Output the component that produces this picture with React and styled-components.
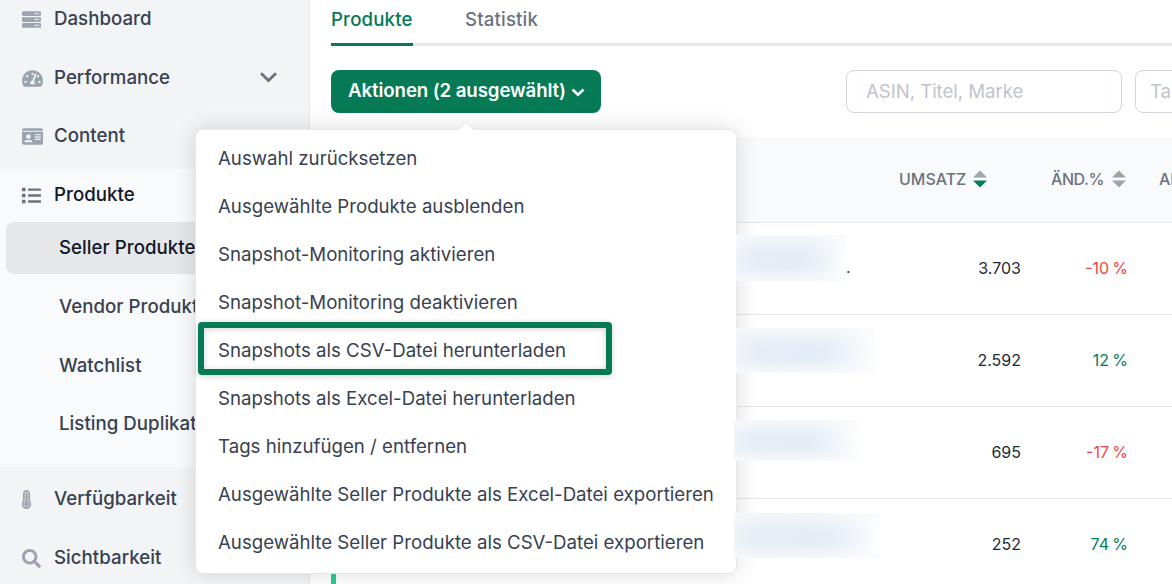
import React from 'react';
import styled, { createGlobalStyle } from 'styled-components';
import {
  FaServer,
  FaTachometerAlt,
  FaIdCard,
  FaList,
  FaThermometerFull,
  FaSearch,
} from 'react-icons/fa';

const GlobalStyle = createGlobalStyle`
  * {
    box-sizing: border-box;
  }
  body {
    margin: 0;
    overflow: hidden;
    font-family: Inter, sans-serif;
    color: #374151;
    background: #fff;
  }
`;

const Layout = styled.div`
  display: flex;
  width: 1172px;
  height: 584px;
  overflow: hidden;
`;

const Sidebar = styled.nav`
  flex: none;
  width: 310px;
  background: #f3f4f6;
  border-right: 1px solid #e5e7eb;
`;

const NavGroup = styled.div`
  display: flex;
  flex-direction: column;
  justify-content: ${props => (props.$end ? 'flex-end' : 'flex-start')};
  gap: 6px;
  height: ${props => props.$height}px;
  padding-top: ${props => props.$top || 0}px;
  padding-bottom: ${props => props.$bottom || 0}px;
  background: ${props => (props.$open ? '#f9fafb' : 'transparent')};
`;

const NavItem = styled.a`
  display: flex;
  flex: none;
  align-items: center;
  height: 52.6px;
  padding: 0 31px ${props => (props.$active ? 2 : 0)}px 22px;
  font-size: 18.67px;
  font-weight: 500;
  letter-spacing: 0.03px;
  white-space: nowrap;
  color: ${props => (props.$active ? '#111827' : '#374151')};
`;

const NavIcon = styled.span`
  display: flex;
  width: 32px;
  padding-top: 2px;
  font-size: ${props => props.$size || 19}px;
  color: ${props => (props.$active ? '#6b7280' : '#9ca3af')};

  svg {
    margin-left: ${props => (props.$narrow ? '-5px' : 0)};
  }
`;

const NavChevron = styled.svg`
  width: 19px;
  height: 12px;
  margin-left: auto;
`;

const SubNav = styled.div`
  display: flex;
  flex-direction: column;
  gap: 6px;
  margin-top: -6px;
`;

const SubItem = styled.a`
  display: flex;
  flex: none;
  align-items: center;
  height: 52.6px;
  margin: 0 6px;
  padding: 0 0 0 53px;
  border-radius: 8px;
  font-size: 18.67px;
  font-weight: 500;
  letter-spacing: 0.03px;
  white-space: nowrap;
  color: ${props => (props.$active ? '#111827' : '#374151')};
  background: ${props => (props.$active ? '#e5e7eb' : 'transparent')};
`;

const Main = styled.main`
  flex: 1;
  min-width: 0;
  padding-left: 21px;
`;

const Tabs = styled.div`
  display: flex;
  height: 46px;
`;

const Tab = styled.a`
  flex: none;
  height: 46px;
  padding-top: 8px;
  padding-left: ${props => (props.$active ? 0 : 52)}px;
  width: ${props => (props.$active ? '82px' : 'auto')};
  flex-grow: ${props => (props.$active ? 0 : 1)};
  font-size: 18.67px;
  line-height: 24px;
  font-weight: 500;
  letter-spacing: 0.15px;
  color: ${props => (props.$active ? '#057a55' : '#6b7280')};
  border-bottom: 3px solid ${props => (props.$active ? '#057a55' : '#e5e7eb')};
`;

const Toolbar = styled.div`
  display: flex;
  align-items: flex-start;
  height: 91px;
  padding-top: 24px;
`;

const ActionWrap = styled.div`
  position: relative;
  flex: none;
  margin-right: 245px;
`;

const ActionButton = styled.button`
  display: flex;
  align-items: center;
  justify-content: center;
  gap: 5px;
  width: 270px;
  height: 43px;
  padding: 0 0 2px 1px;
  border: 0;
  border-radius: 8px;
  font: 600 18.67px Inter, sans-serif;
  letter-spacing: -0.1px;
  white-space: nowrap;
  color: #fff;
  background: #057a55;

  svg {
    margin-top: 2px;
  }
`;

const Menu = styled.div`
  position: absolute;
  z-index: 2;
  top: 59px;
  left: -136px;
  width: 542px;
  height: 445px;
  padding: 4px 0 0 1px;
  border: 1px solid #e5e7eb;
  border-radius: 8px;
  background: #fff;
  box-shadow: 0 0 22px rgba(0, 0, 0, 0.14);
`;

const MenuArrow = styled.svg`
  position: absolute;
  top: -9px;
  left: 262px;
  width: 16px;
  height: 10px;
`;

const MenuItem = styled.div`
  position: relative;
  display: flex;
  align-items: center;
  height: 48px;
  padding-left: 21px;
  font-size: 18.67px;
  white-space: nowrap;
`;

const Highlight = styled.span`
  position: absolute;
  top: -4px;
  left: 1px;
  width: 414px;
  height: 53px;
  border: 6px solid #057a55;
  border-radius: 4px;
  box-shadow: 0 1px 6px rgba(0, 0, 0, 0.18), inset 0 1px 6px rgba(0, 0, 0, 0.18);
`;

const Field = styled.div`
  flex: none;
  width: 276px;
  height: 43px;
  margin-right: 13px;
  padding: 0 14px 0 12px;
  border: 1px solid #d1d5db;
  border-radius: 8px;
  background: #fff;
`;

const FieldText = styled.div`
  height: 41px;
  padding-left: ${props => props.$pad}px;
  border: solid #f9fafb;
  border-width: 0 1px;
  font-size: 18.67px;
  letter-spacing: -0.06px;
  line-height: 41px;
  white-space: nowrap;
  color: #bfc4cc;
`;

const Table = styled.div`
  width: 900px;
`;

const Row = styled.div`
  display: grid;
  grid-template-columns: 563px 122px 106px 1fr;
  align-items: center;
  height: 92px;
  border-bottom: 1px solid #e5e7eb;
  border-left: 5px solid #2ecb95;
  font-size: 16px;
`;

const HeadRow = styled(Row)`
  grid-template-columns: 568px 122px 106px 1fr;
  height: 86px;
  padding-bottom: 2px;
  border-left: 0;
  font-weight: 500;
  color: #6b7280;
  background: #f9fafb;
`;

const HeadCell = styled.div`
  display: flex;
  align-items: center;
  justify-content: ${props => (props.$end ? 'flex-end' : 'flex-start')};
  gap: ${props => (props.$end ? 8 : 7)}px;
  padding-left: ${props => props.$pad || 0}px;
  letter-spacing: ${props => (props.$end ? '-0.4px' : 'normal')};
  white-space: nowrap;
`;

const ProductCell = styled.div`
  display: flex;
  align-items: flex-start;
  height: 91px;
  padding-left: ${props => props.$left}px;
  padding-top: ${props => props.$top}px;
`;

// anonymised product title
const Redacted = styled.div`
  position: relative;
  z-index: 3;
  flex: none;
  width: ${props => props.$width}px;
  height: ${props => props.$height}px;
  background:
    linear-gradient(to bottom, rgba(248, 250, 252, 0.6), rgba(248, 250, 252, 0) 35% 70%, rgba(248, 250, 252, 0.7)),
    radial-gradient(ellipse 45% 65% at 52% 55%, #e3ebf5, rgba(227, 235, 245, 0)),
    radial-gradient(ellipse 38% 70% at 22% 52%, #e6edf4, rgba(230, 237, 244, 0)),
    linear-gradient(100deg, #f4f7fa 0%, #eff3f8 20%, #eff4f9 65%, #fdfefe 98%);
`;

const Dot = styled.span`
  align-self: flex-start;
  margin: 22px 0 0 -1px;
`;

const Value = styled.div`
  padding-bottom: 2px;
  text-align: right;
  color: #1f2937;
`;

const Change = styled(Value)`
  margin-right: -1px;
  word-spacing: -1.2px;
  color: ${props => (props.$negative ? '#ef4444' : '#057a55')};
`;

const SortIcon = ({ active }) => (
  <svg width="15" height="18" viewBox="0 0 15 18">
    <path d="M7 0.5 14 7.5H0z" fill="#9ca3af" />
    <path d="M0 10.5H14L7 17.5z" fill={active ? '#057a55' : '#9ca3af'} />
  </svg>
);

const menuItems = [
  'Auswahl zurücksetzen',
  'Ausgewählte Produkte ausblenden',
  'Snapshot-Monitoring aktivieren',
  'Snapshot-Monitoring deaktivieren',
  'Snapshots als CSV-Datei herunterladen',
  'Snapshots als Excel-Datei herunterladen',
  'Tags hinzufügen / entfernen',
  'Ausgewählte Seller Produkte als Excel-Datei exportieren',
  'Ausgewählte Seller Produkte als CSV-Datei exportieren',
];

const subItems = [
  'Seller Produkte',
  'Vendor Produkte',
  'Watchlist',
  'Listing Duplikate',
];

const rows = [
  { sales: '3.703', change: '-10 %', left: 400, top: 12, width: 111, height: 46, dot: true },
  { sales: '2.592', change: '12 %', left: 400, top: 13, width: 139, height: 45 },
  { sales: '695', change: '-17 %', left: 398, top: 13, width: 124, height: 41 },
  { sales: '252', change: '74 %', left: 398, top: 14, width: 146, height: 45 },
];

const App = () => {
  return (
    <>
      <GlobalStyle />
      <Layout>
        <Sidebar>
          <NavGroup $height={169} $bottom={7} $end>
            <NavItem>
              <NavIcon><FaServer /></NavIcon>
              Dashboard
            </NavItem>
            <NavItem>
              <NavIcon $size={21}><FaTachometerAlt /></NavIcon>
              Performance
              <NavChevron viewBox="0 0 19 12">
                <path
                  d="M2 2.3 9.5 9.6 17 2.3"
                  fill="none"
                  stroke="#6b7280"
                  strokeWidth="2.8"
                />
              </NavChevron>
            </NavItem>
            <NavItem>
              <NavIcon $size={21}><FaIdCard /></NavIcon>
              Content
            </NavItem>
          </NavGroup>
          <NavGroup $height={298} $open>
            <NavItem $active>
              <NavIcon $active><FaList /></NavIcon>
              Produkte
            </NavItem>
            <SubNav>
              {subItems.map((item, i) => (
                <SubItem key={item} $active={i === 0}>
                  {item}
                </SubItem>
              ))}
            </SubNav>
          </NavGroup>
          <NavGroup $height={140} $top={5.4}>
            <NavItem>
              <NavIcon $narrow><FaThermometerFull /></NavIcon>
              Verfügbarkeit
            </NavItem>
            <NavItem>
              <NavIcon><FaSearch /></NavIcon>
              Sichtbarkeit
            </NavItem>
          </NavGroup>
        </Sidebar>
        <Main>
          <Tabs>
            <Tab $active>Produkte</Tab>
            <Tab>Statistik</Tab>
          </Tabs>
          <Toolbar>
            <ActionWrap>
              <ActionButton>
                Aktionen (2 ausgewählt)
                <svg width="14" height="10" viewBox="0 0 14 10">
                  <path
                    d="M1.5 2.5 7 7.8 12.5 2.5"
                    fill="none"
                    stroke="#fff"
                    strokeWidth="2.6"
                  />
                </svg>
              </ActionButton>
              <Menu>
                <MenuArrow viewBox="0 0 16 10">
                  <path d="M0 9 8 1 16 9V10H0z" fill="#fff" />
                  <path d="M0 9 8 1 16 9" fill="none" stroke="#e5e7eb" />
                </MenuArrow>
                {menuItems.map((item, i) => (
                  <MenuItem key={item}>
                    {item}
                    {i === 4 && <Highlight />}
                  </MenuItem>
                ))}
              </Menu>
            </ActionWrap>
            <Field>
              <FieldText $pad={6}>ASIN, Titel, Marke</FieldText>
            </Field>
            <Field>
              <FieldText $pad={1}>Tags</FieldText>
            </Field>
          </Toolbar>
          <Table>
            <HeadRow>
              <HeadCell />
              <HeadCell>
                UMSATZ
                <SortIcon active />
              </HeadCell>
              <HeadCell $end>
                ÄND.%
                <SortIcon />
              </HeadCell>
              <HeadCell $pad={32}>ABSATZ</HeadCell>
            </HeadRow>
            {rows.map(row => (
              <Row key={row.sales}>
                <ProductCell $left={row.left} $top={row.top}>
                  <Redacted $width={row.width} $height={row.height} />
                  {row.dot && <Dot>.</Dot>}
                </ProductCell>
                <Value>{row.sales}</Value>
                <Change $negative={row.change.startsWith('-')}>
                  {row.change}
                </Change>
              </Row>
            ))}
          </Table>
        </Main>
      </Layout>
    </>
  );
};

export default App;
